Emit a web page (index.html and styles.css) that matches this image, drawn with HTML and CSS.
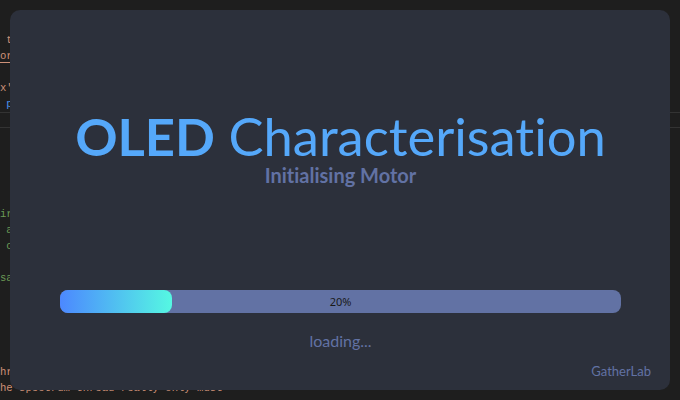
FILE: index.html
```html
<!DOCTYPE html>
<html>
<head>
<meta charset="utf-8">
<link rel="stylesheet" href="styles.css">
</head>
<body>
<div class="editor">
  <div class="group top">
    <div class="ln str"> t = self.thread</div>
    <div class="ln str ul">or = "oled"</div>
    <div class="ln"></div>
    <div class="ln str">x'] = value</div>
    <div class="ln kw"> pass</div>
  </div>
  <div class="sep"></div>
  <div class="sep2"></div>
  <div class="group mid">
    <div class="ln cm">ir the motor here</div>
    <div class="ln cm"> and initialise</div>
    <div class="ln cm"> check position</div>
    <div class="ln"></div>
    <div class="ln cm">save the state</div>
  </div>
  <div class="group bot">
    <div class="ln str">hread is started</div>
    <div class="ln str">he spectrum thread really only must</div>
  </div>
</div>

<div class="window">
  <div class="content">
    <h1 class="title"><span class="strong">OLED</span> Characterisation</h1>
    <div class="subtitle">Initialising Motor</div>
    <div class="bar">
      <div class="chunk" style="width: 20%"></div>
      <span class="pct">20%</span>
    </div>
    <div class="loading">loading...</div>
  </div>
  <div class="footer">GatherLab</div>
</div>
</body>
</html>
```

FILE: styles.css
```css
html, body {
  margin: 0;
  padding: 0;
}
body {
  width: 680px;
  height: 400px;
  background: #1e1e1e;
  overflow: hidden;
  position: relative;
}
.editor {
  font-family: "Liberation Mono", "DejaVu Sans Mono", monospace;
  font-size: 10.6px;
  height: 400px;
  overflow: hidden;
}
.ln {
  height: 16px;
  line-height: 16px;
  white-space: pre;
}
.str { color: #ce9178; }
.cm { color: #6a9955; }
.kw { color: #4a90ea; }
.ul { text-decoration: underline; text-underline-offset: 3px; }
.group.top { padding-top: 32px; }
.sep {
  height: 0;
  border-top: 1px solid #333333;
}
.sep2 {
  height: 14px;
  border-bottom: 1px solid #333333;
}
.group.mid { margin-top: 78px; }
.group.bot { margin-top: 78px; }

.window {
  position: absolute;
  left: 10px;
  top: 10px;
  width: 660px;
  height: 380px;
  background: #2c303b;
  border-radius: 10px;
  display: flex;
  flex-direction: column;
  font-family: Lato, "Noto Sans", sans-serif;
  font-variant-ligatures: none;
}
.content {
  margin: 0 49px 0 50px;
  display: flex;
  flex-direction: column;
  align-items: center;
}
.title {
  margin: 100px 0 0 0;
  font-size: 52.5px;
  line-height: 52.5px;
  font-weight: 400;
  color: #55a8fa;
  white-space: nowrap;
}
.strong { font-weight: 700; }
.subtitle {
  margin-top: 2.5px;
  font-size: 20px;
  line-height: 20px;
  font-weight: 700;
  color: #6272a4;
}
.bar {
  margin-top: 104.5px;
  align-self: stretch;
  height: 23px;
  border-radius: 8px;
  background: #6272a4;
  position: relative;
  display: flex;
  align-items: center;
  justify-content: center;
}
.chunk {
  position: absolute;
  left: 0;
  top: 0;
  bottom: 0;
  border-radius: 8px;
  background: linear-gradient(90deg, #4c88ff, #55f8e2);
}
.pct {
  position: relative;
  font-family: "Noto Sans", sans-serif;
  font-size: 11px;
  color: #1a1a1a;
}
.loading {
  margin-top: 20px;
  font-size: 16px;
  line-height: 16px;
  color: #6272a4;
}
.footer {
  margin-top: 16px;
  padding-right: 19px;
  text-align: right;
  font-size: 13px;
  line-height: 13px;
  color: #6272a4;
}
```
